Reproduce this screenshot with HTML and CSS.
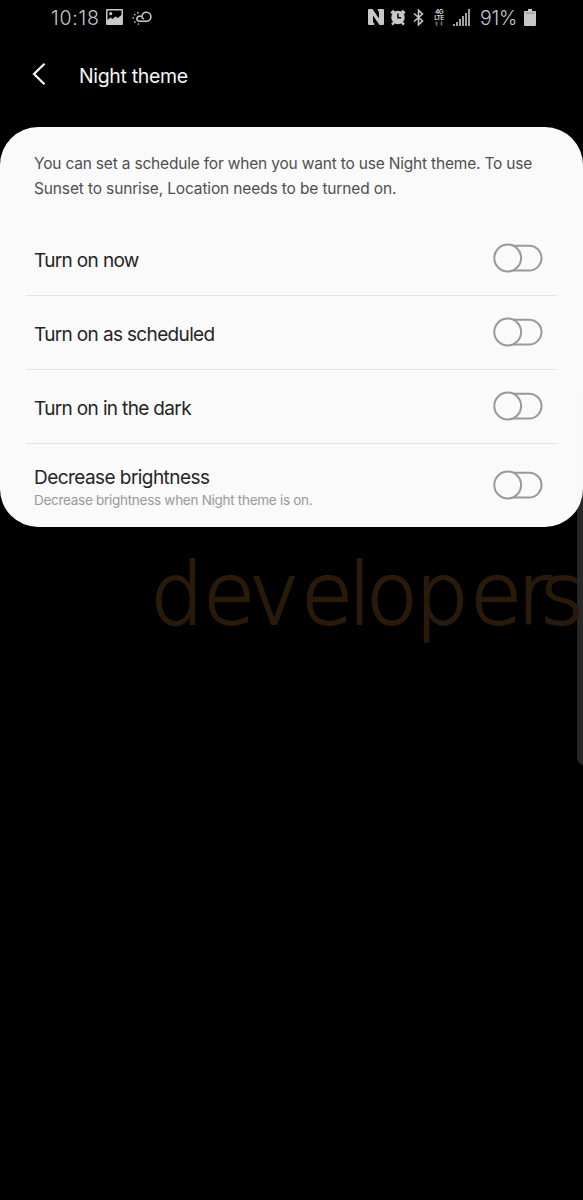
FILE: index.html
```html
<!DOCTYPE html>
<html lang="en">
<head>
<meta charset="utf-8">
<title>Night theme</title>
<link rel="stylesheet" href="styles.css">
</head>
<body>
<div class="screen">
  <header class="status">
    <div class="status-left">
      <span class="clock">10:18</span>
      <svg class="icon-photo" width="17" height="16" viewBox="0 0 18 17"><path fill="currentColor" fill-rule="evenodd" d="M1 0h16q1 0 1 1v15q0 1-1 1H1q-1 0-1-1V1q0-1 1-1zm.6 1.600v10.200L4.500 9l2.500 1.500L10 8l2.500 1.500 3.900-3V1.600z"/><circle cx="5" cy="5" r="1.700" fill="currentColor"/></svg>
      <svg class="icon-weather" width="20" height="15" viewBox="0 0 20 15" fill="none" stroke="currentColor" stroke-width="1.600" stroke-linecap="round"><path d="M8.500 6.200A3 3 0 0 0 4.800 9Q5 11.200 8 11.200h6.500a4.500 4.500 0 1 0-4.600-4.700q0 1.800 1.400 2.200"/><path d="M1 8h.3M2.600 4.500l.2.200M6 2.600v.3M2.800 12.200l.2-.2M6.400 14v.1"/></svg>
    </div>
    <div class="status-right">
      <svg width="16" height="16" viewBox="0 0 16 16"><path fill="currentColor" d="M1 0h3.500l6.500 9.500V3L9.500 1l.5-1h5q1 0 1 1v14q0 1-1 1h-3.500L5 6.500V13l1.500 2-.5 1H1q-1 0-1-1V1q0-1 1-1z"/></svg>
      <svg class="icon-alarm" width="16" height="17" viewBox="0 0 16 17"><circle cx="8" cy="8.500" r="6.700" fill="currentColor"/><path d="M1.200 4.200l3-2.500M14.800 4.200l-3-2.500M4 13.500l-2 2.200M12 13.500l2 2.200" stroke="currentColor" stroke-width="2.500"/><path d="M8 4.500v4.300h3.200" fill="none" stroke="#000" stroke-width="1.500"/></svg>
      <svg class="icon-bt" width="11" height="17" viewBox="0 0 11 17" fill="none" stroke="currentColor" stroke-width="1.600"><path d="M1 4.500l8.500 7.500-4 3.800V1.200l4 3.800L1 12.500"/></svg>
      <span class="network"><b>4G</b><b>LTE</b><svg width="8" height="5" viewBox="0 0 8 5"><path fill="#666" d="M1.500 0L3 2.500h-.8V5H.8V2.500H0zM6.500 5L5 2.500h.8V0h1.400v2.500H8z"/></svg></span>
      <svg class="icon-signal" width="17" height="17" viewBox="0 0 17 17" stroke="currentColor" stroke-width="1.600"><path d="M1 17v-2M4 17v-4M7 17v-7M10 17V7M13 17V4M16 17V0"/></svg>
      <span class="percent">91%</span>
      <svg class="icon-battery" width="12" height="17" viewBox="0 0 12 17"><path fill="currentColor" d="M4 0h4v2h3q1 0 1 1v13q0 1-1 1H1q-1 0-1-1V3q0-1 1-1h3z"/><path d="M1.500 4h9" stroke="#888" stroke-width="1"/></svg>
    </div>
  </header>
  <nav class="appbar">
    <svg class="back" width="14" height="24" viewBox="0 0 14 24" fill="none" stroke="#fafafa" stroke-width="2.200"><path d="M12.500 1.800L2 12l10.500 10.200"/></svg>
    <h1 class="title">Night theme</h1>
  </nav>
  <main class="card">
    <p class="intro"><span class="line line-one">You can set a schedule for when you want to use Night theme. To use</span><span class="line">Sunset to sunrise, Location needs to be turned on.</span></p>
    <section class="row">
      <span class="label">Turn on now</span>
      <svg class="switch" width="50" height="30" viewBox="0 0 50 30"><rect x="3" y="2.700" width="45.500" height="24.800" rx="12.400"/><circle cx="14.700" cy="15" r="13.400"/></svg>
    </section>
    <section class="row">
      <span class="label">Turn on as scheduled</span>
      <svg class="switch" width="50" height="30" viewBox="0 0 50 30"><rect x="3" y="2.700" width="45.500" height="24.800" rx="12.400"/><circle cx="14.700" cy="15" r="13.400"/></svg>
    </section>
    <section class="row">
      <span class="label">Turn on in the dark</span>
      <svg class="switch" width="50" height="30" viewBox="0 0 50 30"><rect x="3" y="2.700" width="45.500" height="24.800" rx="12.400"/><circle cx="14.700" cy="15" r="13.400"/></svg>
    </section>
    <section class="row row-last">
      <span class="label-group"><span class="label">Decrease brightness</span><span class="sub">Decrease brightness when Night theme is on.</span></span>
      <svg class="switch" width="50" height="30" viewBox="0 0 50 30"><rect x="3" y="2.700" width="45.500" height="24.800" rx="12.400"/><circle cx="14.700" cy="15" r="13.400"/></svg>
    </section>
  </main>
  <div class="edge-panel"></div>
  <svg class="watermark" width="433" height="100" viewBox="0 0 433 100"><text y="73" x="0 53 99 151 198 216 265 320 367 390">developers</text></svg>
</div>
</body>
</html>
```
FILE: styles.css
```css
body { margin: 0; background: #000; }
.screen {
  position: relative;
  width: 583px;
  height: 1200px;
  overflow: hidden;
  background: #000;
  color: #c8c8c8;
  font-family: Inter, "Liberation Sans", sans-serif;
}
.status {
  display: flex;
  justify-content: space-between;
  height: 34px;
  padding: 0 47px 0 51px;
  box-sizing: border-box;
}
.status-left, .status-right { display: flex; align-items: center; height: 34px; }
.clock, .percent { font-size: 19.500px; font-weight: 350; line-height: 34px; padding-top: 2px; }
.clock { letter-spacing: .8px; }
.icon-photo { margin-left: 6px; }
.icon-weather { margin-left: 9px; }
.icon-alarm { margin-left: 6px; }
.icon-bt { margin-left: 7px; }
.network { display: flex; flex-direction: column; align-items: center; width: 12px; margin-left: 9px; font-size: 6.500px; line-height: 6px; letter-spacing: -.6px; }
.icon-signal { margin-left: 8px; }
.percent { margin-left: 10px; letter-spacing: -.2px; }
.icon-battery { margin-left: 7px; }
.appbar { display: flex; align-items: center; height: 83px; padding: 0 32px; }
.back { margin-top: -3px; }
.title { margin: 0 0 0 33px; color: #f5f5f5; font-size: 19.500px; font-weight: 400; letter-spacing: -.35px; line-height: 26px; }
.card {
  height: 400px;
  margin-top: 10px;
  padding: 24px 26px 0;
  box-sizing: border-box;
  border-radius: 38px;
  background: #fafafa;
}
.intro { margin: 0 0 21px 8px; color: #505050; font-size: 15.500px; line-height: 25px; letter-spacing: -.14px; }
.line { display: block; white-space: nowrap; }
.line-one { letter-spacing: -.19px; }
.row {
  display: flex;
  align-items: center;
  justify-content: space-between;
  height: 74px;
  padding: 0 14px 0 8px;
  box-sizing: border-box;
  border-bottom: 1px solid #e3e3e3;
}
.row-last { height: 83px; border: 0; }
.label { padding-top: 4px; color: #252525; font-size: 19px; font-weight: 400; line-height: 26px; letter-spacing: -.65px; white-space: nowrap; }
.label-group { display: flex; flex-direction: column; padding-top: 2px; }
.label-group .label { padding-top: 2px; letter-spacing: -.56px; }
.sub { margin-top: -1px; color: #999; font-size: 13.500px; line-height: 20px; letter-spacing: -.28px; }
.switch { margin-top: -2px; fill: #fafafa; stroke: #999; stroke-width: 2; }
.edge-panel {
  position: absolute;
  top: 394px;
  right: -8px;
  width: 14px;
  height: 371px;
  box-sizing: border-box;
  border-radius: 8px;
  border: 1px solid rgba(225, 225, 225, .16);
  background: rgba(250, 250, 250, .16);
  background-clip: padding-box;
}
.watermark { position: absolute; left: 150px; top: 551px; fill: #291a09; stroke: #291a09; stroke-width: 1.800px; font-family: "DejaVu Sans", sans-serif; font-size: 85px; font-weight: 200; }
```
